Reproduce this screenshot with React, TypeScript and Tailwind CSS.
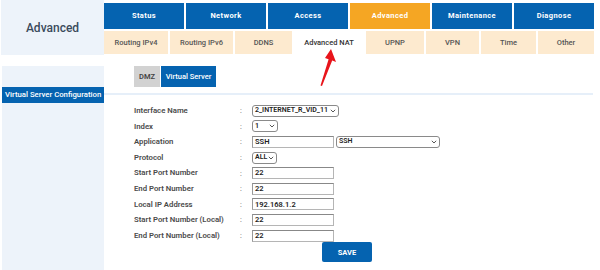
import type { ReactNode } from 'react';

const MAIN_TABS = ['Status', 'Network', 'Access', 'Advanced', 'Maintenance', 'Diagnose'];

const SUB_TABS: { label: string; width: string }[] = [
  { label: 'Routing IPv4', width: 'w-[64px]' },
  { label: 'Routing IPv6', width: 'w-[63px]' },
  { label: 'DDNS', width: 'w-[57px]' },
  { label: 'Advanced NAT', width: 'w-[70px]' },
  { label: 'UPNP', width: 'w-[58px]' },
  { label: 'VPN', width: 'w-[53px]' },
  { label: 'Time', width: 'w-[55px]' },
  { label: 'Other', width: 'w-[56px]' },
];

function Chevron() {
  return (
    <svg width="6" height="4" viewBox="0 0 6 4" className="shrink-0">
      <path d="M0.8 0.8 L3 3 L5.2 0.8" fill="none" stroke="#444" strokeWidth="0.9" />
    </svg>
  );
}

function FakeSelect({ value, width }: { value: string; width: string }) {
  return (
    <div
      className={`${width} flex h-[12px] items-center justify-between gap-[1px] rounded-[3px] border border-[#8a8a8a] bg-white pl-[2px] pr-[2px] text-[7px] font-semibold text-[#222]`}
    >
      <span className="whitespace-nowrap leading-none">{value}</span>
      <Chevron />
    </div>
  );
}

function TextBox({ value }: { value: string }) {
  return (
    <div className="flex h-[12px] w-[82px] items-center border border-[#b5b5b5] border-t-[#888] border-l-[#999] bg-white pl-[2px] text-[7.5px] font-semibold text-[#222]">
      <span className="leading-none">{value}</span>
    </div>
  );
}

function Row({ label, children }: { label: string; children: ReactNode }) {
  return (
    <div className="flex h-[15.6px] items-center">
      <div className="w-[106px] text-[7.75px] font-semibold text-[#4a4a4a]">{label}</div>
      <div className="w-[12px] text-[7.5px] text-[#555]">:</div>
      <div className="flex items-center gap-[2px]">{children}</div>
    </div>
  );
}

export default function App() {
  return (
    <div
      className="relative h-[270px] w-[600px] overflow-hidden bg-white"
      style={{ fontFamily: 'Roboto, "Liberation Sans", Arial, sans-serif' }}
    >
      {/* header */}
      <div className="flex pl-[1px]">
        <div className="flex h-[55px] w-[103px] items-center justify-center bg-[#edf3fa] text-[12px] font-medium text-[#3b4b5c]">
          Advanced
        </div>
        <div className="flex w-[490px] flex-col pt-[3px]">
          <div className="flex h-[26px] gap-[2px]">
            {MAIN_TABS.map((t) => (
              <div
                key={t}
                className={`flex flex-1 items-center justify-center text-[7.5px] font-bold tracking-[0.4px] text-white ${
                  t === 'Advanced' ? 'bg-[#f5a623]' : 'bg-[#0563b0]'
                }`}
              >
                {t}
              </div>
            ))}
          </div>
          <div className="mt-[2px] flex h-[23px] gap-[2px]">
            {SUB_TABS.map((t) => (
              <div
                key={t.label}
                className={`${t.width} flex items-center justify-center text-[7.5px] font-medium ${
                  t.label === 'Advanced NAT' ? 'bg-white text-[#333]' : 'bg-[#fdeacf] text-[#555]'
                }`}
              >
                {t.label}
              </div>
            ))}
          </div>
        </div>
      </div>

      {/* body */}
      <div className="mt-[11px] flex pl-[2px]">
        <div className="h-[204px] w-[102px] bg-[#edf3fa] pt-[21px]">
          <div className="flex h-[16px] items-center whitespace-nowrap bg-[#0563b0] pl-[3px] text-[7.75px] font-medium text-white">
            Virtual Server Configuration
          </div>
        </div>
        <div className="flex w-[489px] flex-col">
          <div className="flex h-[21px] gap-[1px] pl-[30px]">
            <div className="flex w-[26px] items-center justify-center bg-[#d2d2d2] text-[7.5px] font-semibold text-[#444]">
              DMZ
            </div>
            <div className="flex w-[55px] items-center justify-center bg-[#0563b0] text-[7.5px] font-medium text-white">
              Virtual Server
            </div>
          </div>
          <div className="mt-[6px] h-[2px] bg-[#e6eff9]" />
          <div className="mt-[8px] flex flex-col pl-[30px]">
            <Row label="Interface Name">
              <FakeSelect value="2_INTERNET_R_VID_11" width="w-[87px]" />
            </Row>
            <Row label="Index">
              <FakeSelect value="1" width="w-[26px]" />
            </Row>
            <Row label="Application">
              <TextBox value="SSH" />
              <FakeSelect value="SSH" width="w-[104px]" />
            </Row>
            <Row label="Protocol">
              <FakeSelect value="ALL" width="w-[25px]" />
            </Row>
            <Row label="Start Port Number">
              <TextBox value="22" />
            </Row>
            <Row label="End Port Number">
              <TextBox value="22" />
            </Row>
            <Row label="Local IP Address">
              <TextBox value="192.168.1.2" />
            </Row>
            <Row label="Start Port Number (Local)">
              <TextBox value="22" />
            </Row>
            <Row label="End Port Number (Local)">
              <TextBox value="22" />
            </Row>
          </div>
          <div className="mt-[-1px] flex justify-center pr-[3px]">
            <div className="flex h-[20px] w-[50px] items-center justify-center rounded-[2px] bg-[#0563b0] text-[7.5px] font-bold text-white">
              SAVE
            </div>
          </div>
        </div>
      </div>

      {/* red arrow pointing at Advanced NAT */}
      <svg className="absolute left-[314px] top-[46px]" width="24" height="42" viewBox="0 0 24 42">
        <polygon points="17,3 22,16 18.2,14.6 8,40 6.5,39.4 14.6,13.2 11,12" fill="#e8141b" />
      </svg>
    </div>
  );
}
